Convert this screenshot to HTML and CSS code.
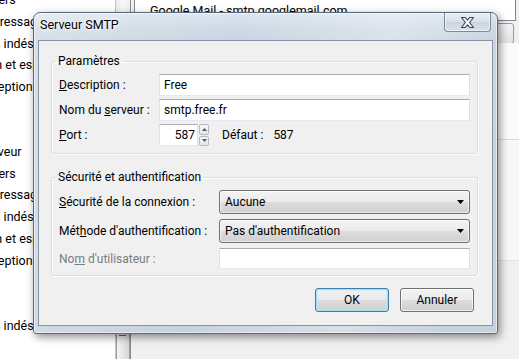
FILE: index.html
```html
<!DOCTYPE html>
<html lang="fr">
<head>
    <meta charset="UTF-8">
    <title>Serveur SMTP</title>
    <link rel="stylesheet" href="styles.css">
</head>
<body>
    <div class="screen">
        <!-- Account tree (behind the dialog) -->
        <div class="tree">
            <ul>
                <li>Copies et dossiers</li>
                <li>Rédaction et adressage</li>
                <li>Paramètres des indésirables</li>
                <li>Synchronisation et espace disque</li>
                <li>Accusés de réception</li>
                <li>Sécurité</li>
                <li class="account">Free</li>
                <li>Paramètres serveur</li>
                <li>Copies et dossiers</li>
                <li>Rédaction et adressage</li>
                <li>Paramètres des indésirables</li>
                <li>Synchronisation et espace disque</li>
                <li>Accusés de réception</li>
                <li>Sécurité</li>
                <li class="account">Dossiers locaux</li>
                <li>Paramètres des indésirables</li>
                <li>Espace disque</li>
            </ul>
        </div>
        <div class="scroll">
            <div class="thumb">
                <span class="grip"></span>
            </div>
        </div>

        <!-- Outgoing servers panel -->
        <div class="main">
            <div class="servers">Google Mail - smtp.googlemail.com</div>
            <div class="tools"><span class="tool-btn"></span></div>
            <div class="details"></div>
            <div class="notes"></div>
        </div>

        <!-- Dialog -->
        <div class="dialog">
            <div class="titlebar">
                <span class="title">Serveur SMTP</span>
                <button class="close" type="button">
                    <svg width="13" height="11" viewBox="0 0 13 11">
                        <polygon points="0.5,0.5 4.2,0.5 6.5,3.2 8.8,0.5 12.5,0.5 8.6,5.5 12.5,10.5 8.8,10.5 6.5,7.8 4.2,10.5 0.5,10.5 4.4,5.5" fill="#f5f7fa" stroke="#394552" stroke-width="1.1" stroke-linejoin="round"/>
                    </svg>
                </button>
            </div>

            <div class="client">
                <fieldset class="group">
                    <legend>Paramètres</legend>
                    <div class="row">
                        <label class="label narrow"><u>D</u>escription :</label>
                        <input class="field" type="text" value="Free">
                    </div>
                    <div class="row">
                        <label class="label narrow">Nom du <u>s</u>erveur :</label>
                        <input class="field" type="text" value="smtp.free.fr">
                    </div>
                    <div class="row">
                        <label class="label narrow"><u>P</u>ort :</label>
                        <input class="field port" type="text" value="587">
                        <div class="spin">
                            <span class="spin-btn">
                                <svg width="5" height="3" viewBox="0 0 5 3"><polygon points="0,3 2.5,0 5,3" fill="#4d5a68"/></svg>
                            </span>
                            <span class="spin-btn">
                                <svg width="5" height="3" viewBox="0 0 5 3"><polygon points="0,0 2.5,3 5,0" fill="#4d5a68"/></svg>
                            </span>
                        </div>
                        <span class="default-label">Défaut :</span>
                        <span class="default-value">587</span>
                    </div>
                </fieldset>

                <fieldset class="group second">
                    <legend>Sécurité et authentification</legend>
                    <div class="row tall">
                        <label class="label wide"><u>S</u>écurité de la connexion :</label>
                        <div class="combo">
                            <span>Aucune</span>
                            <svg width="7" height="4" viewBox="0 0 7 4"><polygon points="0,0 7,0 3.5,4" fill="#000"/></svg>
                        </div>
                    </div>
                    <div class="row tall">
                        <label class="label wide">Mét<u>h</u>ode d'authentification :</label>
                        <div class="combo">
                            <span>Pas d'authentification</span>
                            <svg width="7" height="4" viewBox="0 0 7 4"><polygon points="0,0 7,0 3.5,4" fill="#000"/></svg>
                        </div>
                    </div>
                    <div class="row short">
                        <label class="label wide disabled">No<u>m</u> d'utilisateur :</label>
                        <input class="field" type="text" value="" disabled>
                    </div>
                </fieldset>

                <div class="actions">
                    <button class="btn default" type="button">OK</button>
                    <button class="btn" type="button">Annuler</button>
                </div>
            </div>
        </div>
    </div>
</body>
</html>
```

FILE: styles.css
```css
body {
    margin: 0;
    font-family: Roboto, "Noto Sans", sans-serif;
    font-size: 12px;
    color: #000;
    background-color: #f0f0f0;
}

.screen {
    position: relative;
    width: 519px;
    height: 359px;
    overflow: hidden;
    display: flex;
}

/* Tree on the left */
.tree {
    width: 115px;
    background-color: #fff;
    overflow: hidden;
}

.tree ul {
    list-style: none;
    margin: -10.85px 0 0;
    padding: 0;
}

.tree li {
    line-height: 21.7px;
    font-size: 12.5px;
    white-space: nowrap;
    margin-left: -87px;
}

.tree li.account {
    margin-left: -100px;
}

.scroll {
    width: 14px;
    border-left: 1px solid #c4c4c4;
    background: linear-gradient(90deg, #ececec, #f8f8f8 50%, #ededed);
    display: flex;
    flex-direction: column;
    justify-content: flex-end;
}

.thumb {
    height: 40px;
    margin-bottom: -5px;
    border: 1px solid #9b9b9b;
    border-radius: 2px;
    background: linear-gradient(90deg, #f4f4f4, #e3e3e3 60%, #d6d6d6);
    display: flex;
    justify-content: center;
    padding-top: 4px;
    box-sizing: border-box;
}

.grip {
    width: 7px;
    height: 8px;
    margin-left: -2px;
    background: repeating-linear-gradient(180deg, #5a5a5a 0, #5a5a5a 1px, #f0f0f0 1px, #f0f0f0 3px);
}

/* Right side panel */
.main {
    flex: 1;
    display: flex;
    flex-direction: column;
    border-left: 1px solid #8a8f96;
}

.servers {
    height: 20px;
    margin: 0 3px 0 3px;
    padding-left: 15px;
    background-color: #fff;
    border: 1px solid #828790;
    border-top: none;
    font-size: 12.5px;
    line-height: 22px;
    white-space: nowrap;
    overflow: hidden;
}

.tools {
    height: 22px;
    display: flex;
    justify-content: flex-end;
    padding: 2px 5px 0 0;
    box-sizing: border-box;
}

.tool-btn {
    width: 80px;
    height: 19px;
    border: 1px solid #9a9a9a;
    border-radius: 3px;
    background: linear-gradient(#f4f4f4, #e2e2e2);
}

.details {
    height: 96px;
    background-color: #fbfbfb;
    border-bottom: 1px solid #d9d9d9;
}

.notes {
    height: 120px;
    background-color: #f8f8f8;
    border-bottom: 1px solid #e2e2e2;
}

/* Dialog window */
.dialog {
    position: absolute;
    left: 33px;
    top: 12px;
    width: 465px;
    height: 322px;
    box-sizing: border-box;
    border: 1px solid #5d6876;
    border-radius: 7px 7px 3px 3px;
    background: linear-gradient(100deg, rgba(255, 255, 255, 0.25), rgba(255, 255, 255, 0) 40%, rgba(255, 255, 255, 0.3) 70%, rgba(255, 255, 255, 0) 90%),
        linear-gradient(180deg, #dde6ef 0, #cfdae6 14px, #c9d5e2 28px, #c6d2df 100%);
    padding: 0 4px 7px;
    display: flex;
    flex-direction: column;
    box-shadow: 2px 3px 9px rgba(0, 0, 0, 0.45), inset 0 0 0 1px rgba(255, 255, 255, 0.55);
}

.titlebar {
    height: 27px;
    display: flex;
    align-items: flex-start;
}

.title {
    padding: 4px 0 0 2px;
    line-height: 16px;
    font-size: 12.5px;
    text-shadow: 0 0 5px #fff, 0 0 3px #fff;
}

.close {
    margin-left: auto;
    margin-right: 2px;
    width: 47px;
    height: 19px;
    padding: 0;
    border: 1px solid #7d8997;
    border-top: none;
    border-radius: 0 0 4px 4px;
    background: linear-gradient(#e9eef4, #d6dfe9 50%, #cad5e1 51%, #d9e2ec);
    box-shadow: inset 0 0 0 1px rgba(255, 255, 255, 0.5);
    display: flex;
    align-items: center;
    justify-content: center;
}

.client {
    flex: 1;
    background-color: #f0f0f0;
    border: 1px solid #8794a3;
    padding: 12px 14px 0 12px;
    display: flex;
    flex-direction: column;
}

.group {
    margin: 0;
    padding: 0 7px 7px;
    border: 1px solid #d5dfe5;
    border-radius: 3px;
    box-shadow: inset 1px 1px 0 #fff, 1px 1px 0 #fff;
}

.group legend {
    margin-left: -3px;
    padding: 0 2px;
    line-height: 16px;
}

.group.second {
    margin-top: 15px;
    padding-bottom: 6px;
}

.row {
    display: flex;
    align-items: center;
    height: 22px;
    margin-top: 3px;
}

.row:first-of-type {
    margin-top: 5px;
}

.row.tall {
    height: 24px;
    margin-top: 5px;
}

.row.short {
    height: 21px;
    margin-top: 5px;
}

.label {
    flex: none;
    white-space: nowrap;
}

.label.narrow {
    width: 100px;
}

.label.wide {
    width: 160px;
}

.label.disabled {
    color: #7b7b7b;
}

.field {
    flex: 1;
    min-width: 0;
    height: 100%;
    box-sizing: border-box;
    margin: 0;
    padding: 0 4px;
    border: 1px solid;
    border-color: #abadb3 #dbdfe6 #e3e9ef #e2e3ea;
    background-color: #fff;
    font-family: Roboto, "Noto Sans", sans-serif;
    font-size: 12px;
    color: #000;
    outline: none;
}

.field:disabled {
    background-color: #fff;
}

.field.port {
    flex: none;
    width: 39px;
    padding: 0 2px 0 0;
    text-align: right;
}

.spin {
    width: 10px;
    height: 22px;
    margin-left: 1px;
    display: flex;
    flex-direction: column;
    gap: 1px;
}

.spin-btn {
    flex: 1;
    border: 1px solid #b5bcc5;
    border-radius: 2px;
    background: linear-gradient(#f7f7f7, #e4e6e9);
    display: flex;
    align-items: center;
    justify-content: center;
}

.default-label {
    margin-left: 13px;
}

.default-value {
    margin-left: 10px;
}

.combo {
    flex: 1;
    height: 100%;
    box-sizing: border-box;
    border: 1px solid #707070;
    border-radius: 3px;
    padding: 0 5px;
    background: linear-gradient(#f3f3f3 0, #ebebeb 50%, #dddddd 51%, #d0d0d0 100%);
    box-shadow: inset 0 0 0 1px rgba(255, 255, 255, 0.6);
    display: flex;
    align-items: center;
    justify-content: space-between;
}

.actions {
    margin-top: 12px;
    padding-right: 4px;
    display: flex;
    justify-content: flex-end;
    gap: 11px;
}

.btn {
    width: 74px;
    height: 24px;
    padding: 0;
    border: 1px solid #707070;
    border-radius: 3px;
    background: linear-gradient(#f2f2f2 0, #ebebeb 50%, #dddddd 51%, #cfcfcf 100%);
    box-shadow: inset 0 0 0 1px rgba(255, 255, 255, 0.7);
    font-family: Roboto, "Noto Sans", sans-serif;
    font-size: 12px;
    color: #000;
}

.btn.default {
    border-color: #3c7fb1;
    box-shadow: inset 0 0 0 1px #a8dcf3, inset 0 0 3px 1px #c4ecfb;
}
```
